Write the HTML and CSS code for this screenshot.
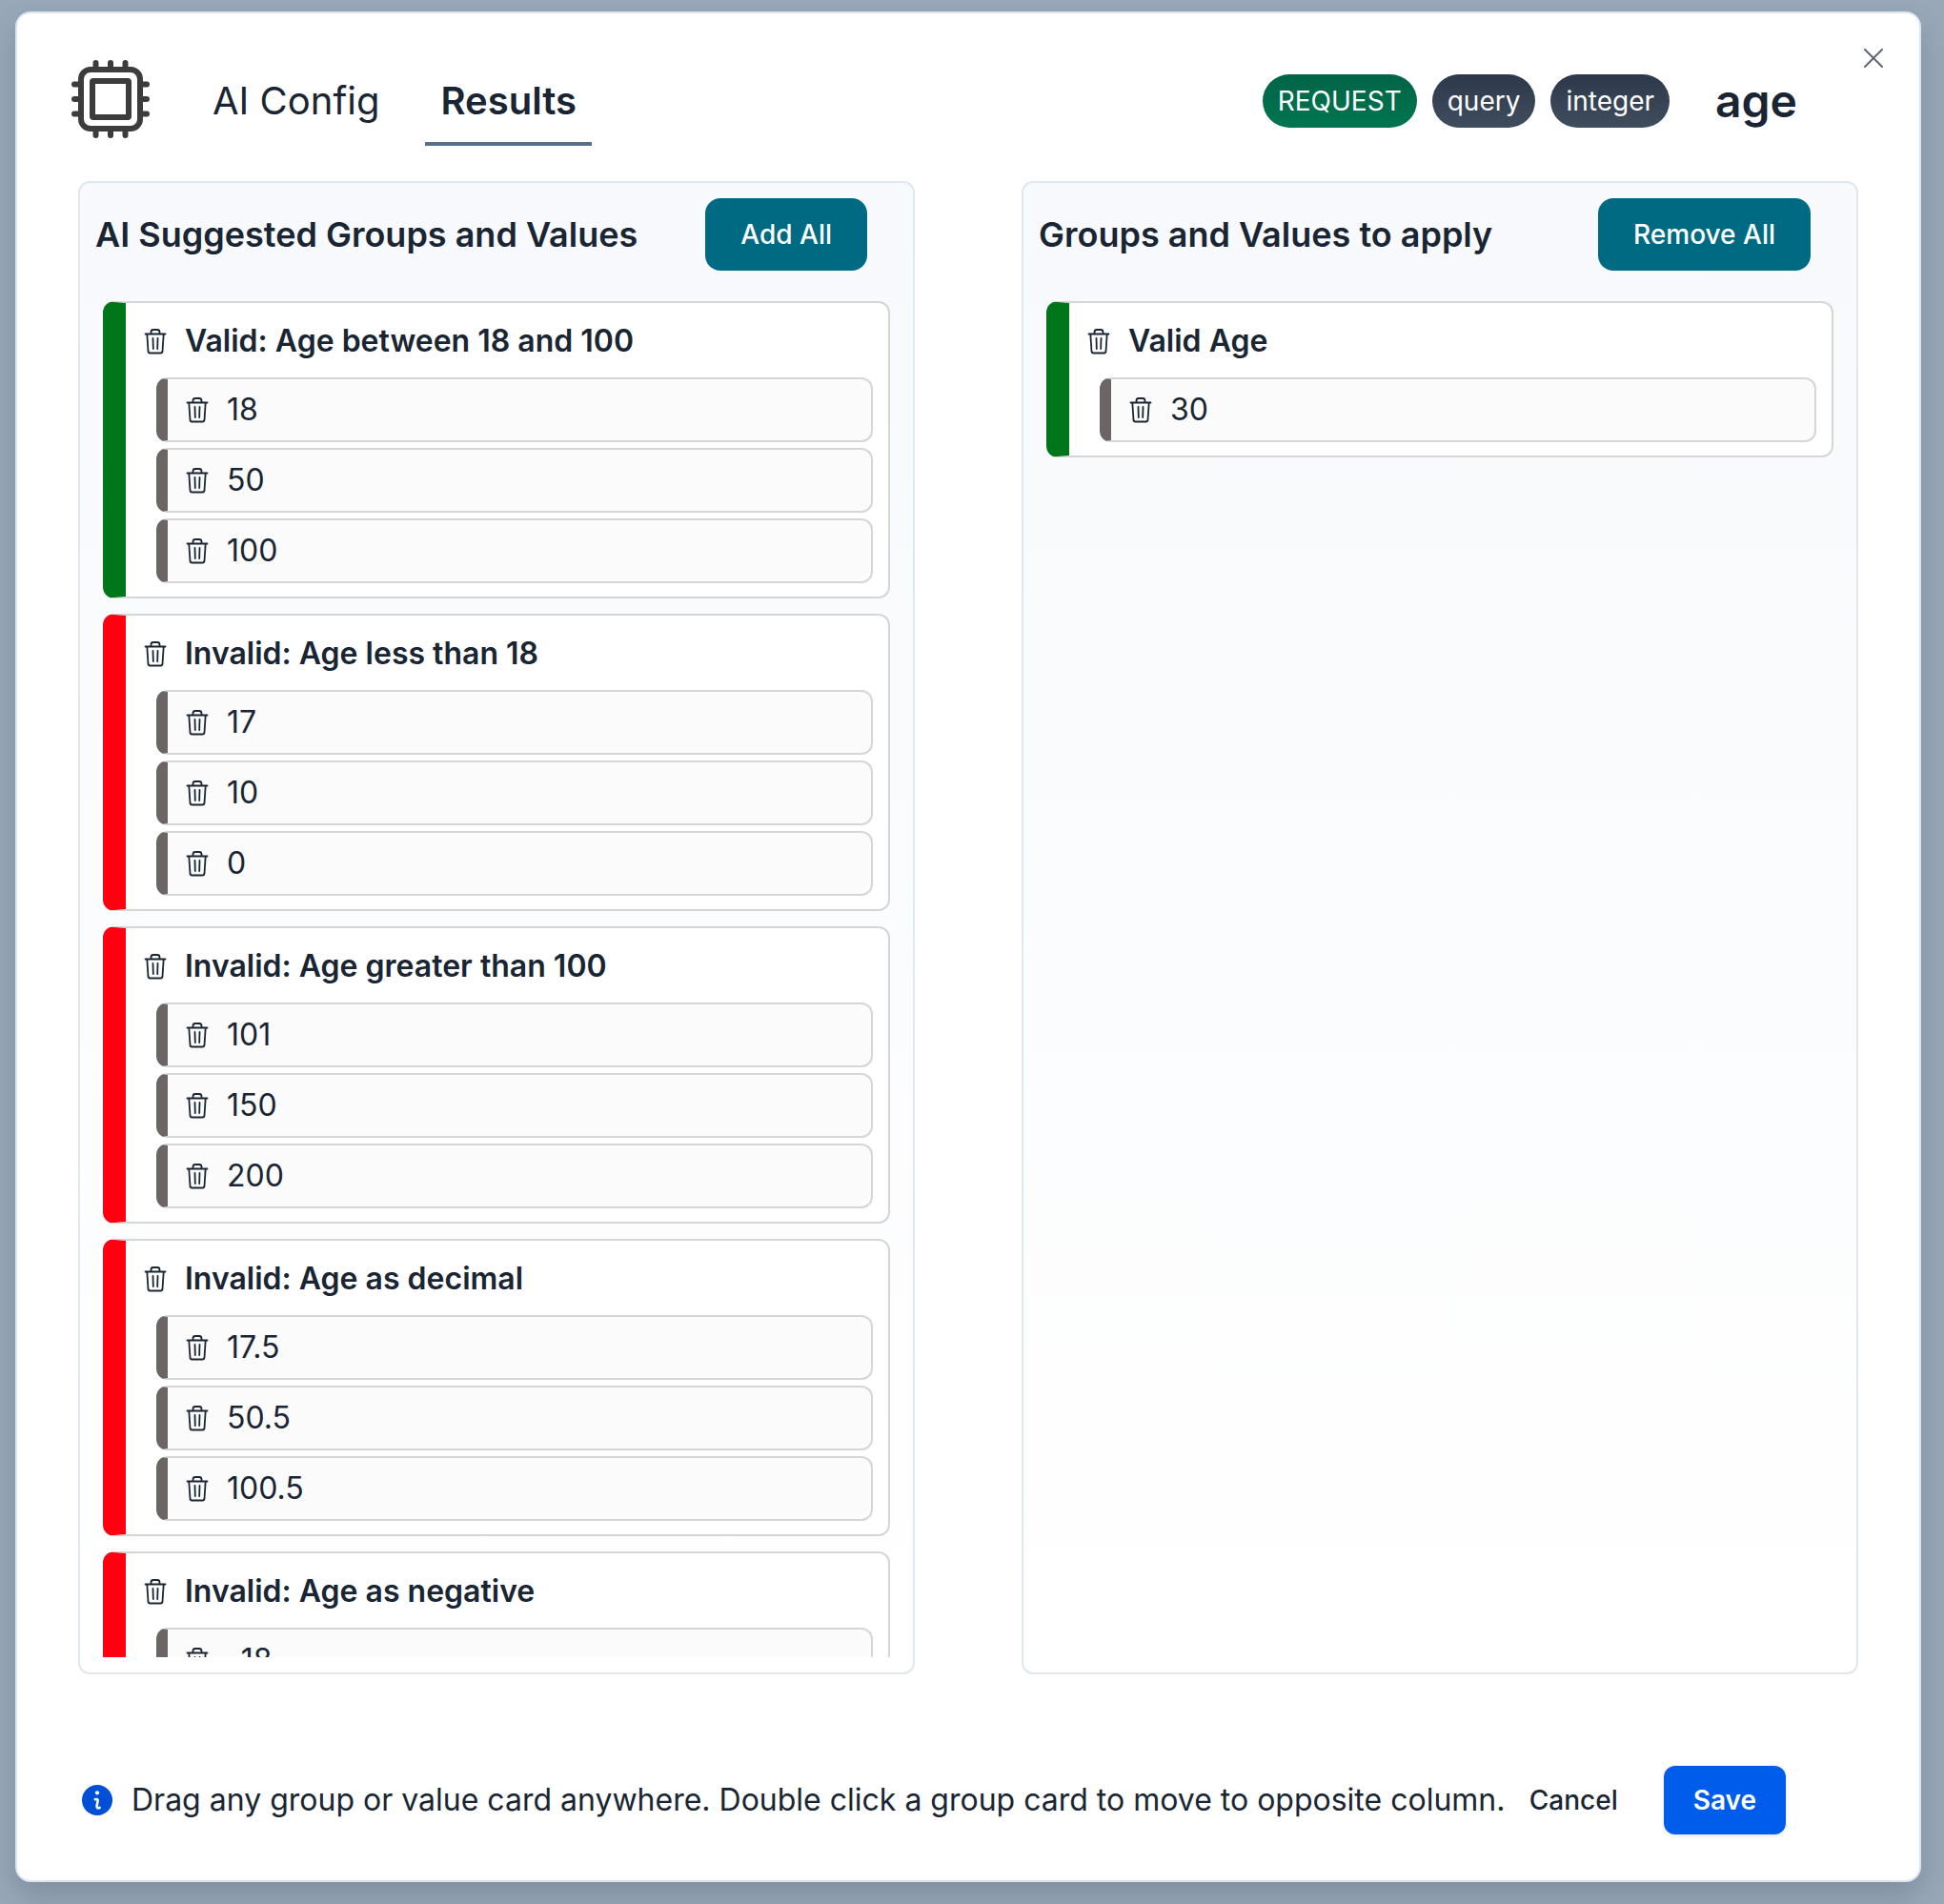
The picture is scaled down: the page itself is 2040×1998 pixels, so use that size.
FILE: index.html
```html
<!DOCTYPE html>
<html lang="en">
<head>
<meta charset="utf-8">
<meta name="viewport" content="width=device-width, initial-scale=1">
<title>AI Results</title>
<link rel="stylesheet" href="styles.css">
</head>
<body>
<svg class="sprite" aria-hidden="true">
  <symbol id="trash" viewBox="0 0 24 28">
    <path d="M1.500 6.500h21M7.500 6.500V4.500a2.500 2.500 0 0 1 2.500-2.500h4a2.500 2.500 0 0 1 2.500 2.500v2M3.300 6.500l1.200 18.200a2 2 0 0 0 2 1.800h11a2 2 0 0 0 2-1.800L20.700 6.500M9.500 11l.3 11M14.500 11l-.3 11" fill="none" stroke="currentColor" stroke-width="1.800" stroke-linecap="round" stroke-linejoin="round"/>
  </symbol>
</svg>
<main class="modal" role="dialog" aria-label="AI results for age">
  <button class="close" type="button" aria-label="Close">
    <svg viewBox="0 0 20 20"><path d="M1 1l18 18M19 1L1 19" fill="none" stroke="currentColor" stroke-width="2" stroke-linecap="round"/></svg>
  </button>
  <header class="top">
    <svg class="chip" viewBox="0 0 82 82" aria-hidden="true">
      <g fill="none" stroke="#3c3c3c" stroke-width="6" stroke-linecap="round">
        <path d="M25.500 3v6M41 3v6M56.500 3v6M25.500 73v6M41 73v6M56.500 73v6M3 25.500h6M3 41h6M3 56.500h6M73 25.500h6M73 41h6M73 56.500h6"/>
        <rect x="10" y="10" width="62" height="62" rx="10"/>
        <rect x="22" y="22" width="38" height="38" rx="1"/>
      </g>
    </svg>
    <nav class="tabs">
      <button class="tab" type="button">AI Config</button>
      <button class="tab tab-active" type="button">Results</button>
    </nav>
    <div class="meta">
      <span class="badge badge-green">REQUEST</span>
      <span class="badge">query</span>
      <span class="badge">integer</span>
      <h1 class="name">age</h1>
    </div>
  </header>

  <div class="columns">
    <section class="panel">
      <div class="panel-head"><h2>AI Suggested Groups and Values</h2><button class="action" type="button">Add All</button></div>
      <div class="list">
        <article class="card valid">
          <h3 class="card-title"><button class="del" type="button" aria-label="Delete group"><svg><use href="#trash"/></svg></button>Valid: Age between 18 and 100</h3>
          <ul>
            <li><button class="del" type="button" aria-label="Delete value"><svg><use href="#trash"/></svg></button>18</li>
            <li><button class="del" type="button" aria-label="Delete value"><svg><use href="#trash"/></svg></button>50</li>
            <li><button class="del" type="button" aria-label="Delete value"><svg><use href="#trash"/></svg></button>100</li>
          </ul>
        </article>
        <article class="card">
          <h3 class="card-title"><button class="del" type="button" aria-label="Delete group"><svg><use href="#trash"/></svg></button>Invalid: Age less than 18</h3>
          <ul>
            <li><button class="del" type="button" aria-label="Delete value"><svg><use href="#trash"/></svg></button>17</li>
            <li><button class="del" type="button" aria-label="Delete value"><svg><use href="#trash"/></svg></button>10</li>
            <li><button class="del" type="button" aria-label="Delete value"><svg><use href="#trash"/></svg></button>0</li>
          </ul>
        </article>
        <article class="card">
          <h3 class="card-title"><button class="del" type="button" aria-label="Delete group"><svg><use href="#trash"/></svg></button>Invalid: Age greater than 100</h3>
          <ul>
            <li><button class="del" type="button" aria-label="Delete value"><svg><use href="#trash"/></svg></button>101</li>
            <li><button class="del" type="button" aria-label="Delete value"><svg><use href="#trash"/></svg></button>150</li>
            <li><button class="del" type="button" aria-label="Delete value"><svg><use href="#trash"/></svg></button>200</li>
          </ul>
        </article>
        <article class="card">
          <h3 class="card-title"><button class="del" type="button" aria-label="Delete group"><svg><use href="#trash"/></svg></button>Invalid: Age as decimal</h3>
          <ul>
            <li><button class="del" type="button" aria-label="Delete value"><svg><use href="#trash"/></svg></button>17.5</li>
            <li><button class="del" type="button" aria-label="Delete value"><svg><use href="#trash"/></svg></button>50.5</li>
            <li><button class="del" type="button" aria-label="Delete value"><svg><use href="#trash"/></svg></button>100.5</li>
          </ul>
        </article>
        <article class="card">
          <h3 class="card-title"><button class="del" type="button" aria-label="Delete group"><svg><use href="#trash"/></svg></button>Invalid: Age as negative</h3>
          <ul>
            <li><button class="del" type="button" aria-label="Delete value"><svg><use href="#trash"/></svg></button>-18</li>
          </ul>
        </article>
      </div>
    </section>

    <section class="panel">
      <div class="panel-head"><h2>Groups and Values to apply</h2><button class="action" type="button">Remove All</button></div>
      <div class="list">
        <article class="card valid">
          <h3 class="card-title"><button class="del" type="button" aria-label="Delete group"><svg><use href="#trash"/></svg></button>Valid Age</h3>
          <ul>
            <li><button class="del" type="button" aria-label="Delete value"><svg><use href="#trash"/></svg></button>30</li>
          </ul>
        </article>
      </div>
    </section>
  </div>

  <footer class="bottom">
    <svg class="info" viewBox="0 0 32 32" aria-hidden="true">
      <circle cx="16" cy="16" r="16" fill="#004fd6"/>
      <circle cx="16" cy="8.300" r="2.100" fill="#fff"/>
      <path d="M13.800 15.200q3.200-1 2.800 1.600l-1 5.200q-.3 2.800 2.400 2.300l.6-.4" fill="none" stroke="#fff" stroke-width="2.600" stroke-linecap="round"/>
    </svg>
    <p class="hint">Drag any group or value card anywhere. Double click a group card to move to opposite column.</p>
    <button class="cancel" type="button">Cancel</button>
    <button class="save" type="button">Save</button>
  </footer>
</main>
</body>
</html>
```
FILE: styles.css
```css
* { box-sizing: border-box; }

body {
  margin: 0;
  height: 100vh;
  padding: 12px 24px 23px 16px;
  background: #98a8b9;
  color: #1a2533;
  font-family: Inter, "Liberation Sans", sans-serif;
  font-size: 32px;
  line-height: 40px;
  overflow: hidden;
}

h1, h2, h3, p, ul { margin: 0; padding: 0; }
ul { list-style: none; }

button {
  margin: 0;
  padding: 0;
  border: 0;
  background: none;
  color: inherit;
  font: inherit;
  cursor: pointer;
}

svg { display: block; }
.sprite { position: absolute; width: 0; height: 0; }

.modal {
  position: relative;
  display: flex;
  flex-direction: column;
  height: 100%;
  padding: 0 64px 48px;
  border: 2px solid #dce4ed;
  border-radius: 16px;
  background: #fff;
  box-shadow: 0 16px 32px rgba(30, 45, 65, 0.2);
}

.close { position: absolute; top: 37px; right: 38px; color: #5c6673; }
.close svg { width: 20px; height: 20px; }

.top {
  display: flex;
  align-items: center;
  height: 176px;
  padding: 4px 64px 0 0;
}
.chip { width: 82px; height: 82px; margin: 0 50px 0 -7px; }
.tabs { display: flex; gap: 32px; padding-top: 6px; }
.tab {
  height: 92px;
  padding: 2px 16px 0;
  border-bottom: 4px solid transparent;
  font-size: 40px;
}
.tab-active { border-color: #586f8b; font-weight: 600; }

.meta {
  display: flex;
  align-items: center;
  gap: 16px;
  margin-left: auto;
  padding-top: 4px;
}
.badge {
  padding: 8px 16px;
  border-radius: 28px;
  background: linear-gradient(#2d394b, #404d5f);
  color: #fff;
  font-size: 28px;
}
.badge-green { background: linear-gradient(#006446, #007550); }
.name { margin-left: 32px; font-size: 48px; font-weight: 600; }

.columns {
  flex: 1;
  display: grid;
  grid-template-columns: 1fr 1fr;
  gap: 112px;
  min-height: 0;
}
.panel {
  display: flex;
  flex-direction: column;
  min-width: 0;
  min-height: 0;
  padding: 16px;
  border: 2px solid #dfe7ef;
  border-radius: 12px;
  background: linear-gradient(#f7f9fc, #fff);
}
.panel-head {
  display: flex;
  align-items: center;
  justify-content: space-between;
  padding-right: 32px;
  margin-bottom: 32px;
}
h2 { font-size: 36px; font-weight: 600; }
.action {
  height: 76px;
  padding: 0 37px;
  border-radius: 16px;
  background: #006a82;
  color: #fff;
  font-size: 28px;
  font-weight: 500;
}

.list {
  flex: 1;
  display: flex;
  flex-direction: column;
  gap: 16px;
  min-height: 0;
  padding: 0 8px;
  overflow: hidden;
}
.card {
  flex: none;
  padding: 20px 16px 14px 19px;
  border: 2px solid #d6d6d6;
  border-left: 24px solid #ff0010;
  border-radius: 12px;
  background: #fff;
}
.card.valid { border-left-color: #00761b; }
.card-title {
  display: flex;
  align-items: center;
  margin-bottom: 18px;
  font-size: 32px;
  font-weight: 600;
}
.del { margin-right: 19px; }
.del svg { width: 24px; height: 28px; }
.card ul { display: flex; flex-direction: column; gap: 6px; margin-left: 13px; }
.card li {
  display: flex;
  align-items: center;
  height: 68px;
  padding-left: 19px;
  border: 2px solid #d6d6d6;
  border-left: 12px solid #6b6665;
  border-radius: 12px;
  background: #fbfbfb;
}

.bottom {
  display: flex;
  align-items: center;
  height: 72px;
  margin-top: 96px;
  padding-right: 76px;
}
.info { width: 32px; height: 32px; margin: 0 20px 0 4px; }
.cancel { margin-left: auto; font-size: 28px; font-weight: 500; }
.save {
  height: 72px;
  margin-left: 48px;
  padding: 0 31px;
  border-radius: 12px;
  background: #005ceb;
  color: #fff;
  font-size: 28px;
  font-weight: 600;
  box-shadow: 0 2px 4px rgba(20, 40, 80, 0.1);
}
```
